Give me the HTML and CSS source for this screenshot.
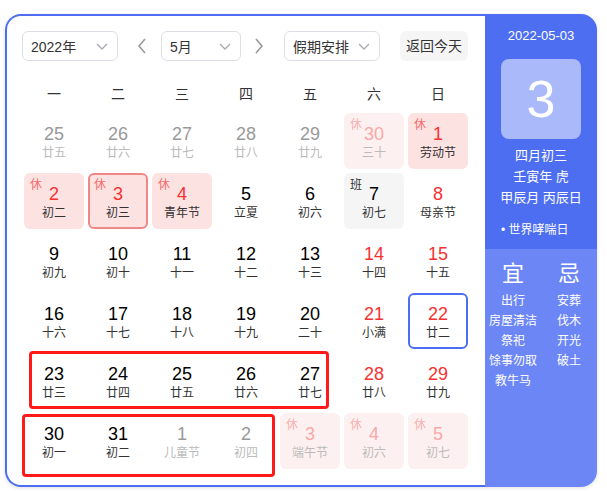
FILE: index.html
```html
<!DOCTYPE html>
<html lang="zh">
<head>
<meta charset="utf-8">
<link rel="stylesheet" href="styles.css">
</head>
<body>
<div class="cal">
  <div class="main">
    <div class="toolbar">
      <div class="select sel-year"><span>2022年</span><svg class="caret" viewBox="0 0 12 7" width="12" height="7"><path d="M1 1 L6 6 L11 1" fill="none" stroke="#a8abb2" stroke-width="1.4"/></svg></div>
      <svg class="arrow arrow-left" viewBox="0 0 10 16" width="10" height="16"><path d="M8 1 L2 8 L8 15" fill="none" stroke="#999" stroke-width="1.6"/></svg>
      <div class="select sel-month"><span>5月</span><svg class="caret" viewBox="0 0 12 7" width="12" height="7"><path d="M1 1 L6 6 L11 1" fill="none" stroke="#a8abb2" stroke-width="1.4"/></svg></div>
      <svg class="arrow arrow-right" viewBox="0 0 10 16" width="10" height="16"><path d="M2 1 L8 8 L2 15" fill="none" stroke="#999" stroke-width="1.6"/></svg>
      <div class="select sel-holiday"><span>假期安排</span><svg class="caret" viewBox="0 0 12 7" width="12" height="7"><path d="M1 1 L6 6 L11 1" fill="none" stroke="#a8abb2" stroke-width="1.4"/></svg></div>
      <div class="today-btn">返回今天</div>
    </div>
    <div class="weekdays">
      <div>一</div><div>二</div><div>三</div><div>四</div><div>五</div><div>六</div><div>日</div>
    </div>
    <div class="grid">
      <div class="cell out"><div class="num">25</div><div class="lunar">廿五</div></div>
      <div class="cell out"><div class="num">26</div><div class="lunar">廿六</div></div>
      <div class="cell out"><div class="num">27</div><div class="lunar">廿七</div></div>
      <div class="cell out"><div class="num">28</div><div class="lunar">廿八</div></div>
      <div class="cell out"><div class="num">29</div><div class="lunar">廿九</div></div>
      <div class="cell out rest"><span class="tag">休</span><div class="num">30</div><div class="lunar">三十</div></div>
      <div class="cell rest"><span class="tag">休</span><div class="num">1</div><div class="lunar">劳动节</div></div>

      <div class="cell rest"><span class="tag">休</span><div class="num">2</div><div class="lunar">初二</div></div>
      <div class="cell rest today"><span class="tag">休</span><div class="num">3</div><div class="lunar">初三</div></div>
      <div class="cell rest"><span class="tag">休</span><div class="num">4</div><div class="lunar">青年节</div></div>
      <div class="cell"><div class="num">5</div><div class="lunar">立夏</div></div>
      <div class="cell"><div class="num">6</div><div class="lunar">初六</div></div>
      <div class="cell work"><span class="tag">班</span><div class="num">7</div><div class="lunar">初七</div></div>
      <div class="cell red"><div class="num">8</div><div class="lunar">母亲节</div></div>

      <div class="cell"><div class="num">9</div><div class="lunar">初九</div></div>
      <div class="cell"><div class="num">10</div><div class="lunar">初十</div></div>
      <div class="cell"><div class="num">11</div><div class="lunar">十一</div></div>
      <div class="cell"><div class="num">12</div><div class="lunar">十二</div></div>
      <div class="cell"><div class="num">13</div><div class="lunar">十三</div></div>
      <div class="cell red"><div class="num">14</div><div class="lunar">十四</div></div>
      <div class="cell red"><div class="num">15</div><div class="lunar">十五</div></div>

      <div class="cell"><div class="num">16</div><div class="lunar">十六</div></div>
      <div class="cell"><div class="num">17</div><div class="lunar">十七</div></div>
      <div class="cell"><div class="num">18</div><div class="lunar">十八</div></div>
      <div class="cell"><div class="num">19</div><div class="lunar">十九</div></div>
      <div class="cell"><div class="num">20</div><div class="lunar">二十</div></div>
      <div class="cell red"><div class="num">21</div><div class="lunar">小满</div></div>
      <div class="cell red selected"><div class="num">22</div><div class="lunar">廿二</div></div>

      <div class="cell"><div class="num">23</div><div class="lunar">廿三</div></div>
      <div class="cell"><div class="num">24</div><div class="lunar">廿四</div></div>
      <div class="cell"><div class="num">25</div><div class="lunar">廿五</div></div>
      <div class="cell"><div class="num">26</div><div class="lunar">廿六</div></div>
      <div class="cell"><div class="num">27</div><div class="lunar">廿七</div></div>
      <div class="cell red"><div class="num">28</div><div class="lunar">廿八</div></div>
      <div class="cell red"><div class="num">29</div><div class="lunar">廿九</div></div>

      <div class="cell"><div class="num">30</div><div class="lunar">初一</div></div>
      <div class="cell"><div class="num">31</div><div class="lunar">初二</div></div>
      <div class="cell out"><div class="num">1</div><div class="lunar">儿童节</div></div>
      <div class="cell out"><div class="num">2</div><div class="lunar">初四</div></div>
      <div class="cell out rest"><span class="tag">休</span><div class="num">3</div><div class="lunar">端午节</div></div>
      <div class="cell out rest"><span class="tag">休</span><div class="num">4</div><div class="lunar">初六</div></div>
      <div class="cell out rest"><span class="tag">休</span><div class="num">5</div><div class="lunar">初七</div></div>
    </div>
  </div>
  <div class="side">
    <div class="side-top">
      <div class="side-date">2022-05-03</div>
      <div class="big-day">3</div>
      <div class="lunar-info">
        <div>四月初三</div>
        <div>壬寅年 虎</div>
        <div>甲辰月 丙辰日</div>
      </div>
      <div class="fest">• 世界哮喘日</div>
    </div>
    <div class="side-bottom">
      <div class="col">
        <div class="yj">宜</div>
        <div>出行</div>
        <div>房屋清洁</div>
        <div>祭祀</div>
        <div>馀事勿取</div>
        <div>教牛马</div>
      </div>
      <div class="col">
        <div class="yj">忌</div>
        <div>安葬</div>
        <div>伐木</div>
        <div>开光</div>
        <div>破土</div>
      </div>
    </div>
  </div>
</div>
<div class="mark mark-1"></div>
<div class="mark mark-2"></div>
</body>
</html>
```

FILE: styles.css
```css
* { box-sizing: border-box; }
html, body { margin: 0; padding: 0; background: #fff; }
body {
  font-family: "Liberation Sans", Arial, "Noto Sans CJK SC", sans-serif;
  color: #333;
  position: relative;
  width: 607px;
  height: 491px;
  overflow: hidden;
}
.cal {
  display: flex;
  margin: 14px 0 0 5px;
  width: 592px;
  height: 473px;
  border-radius: 16px;
  box-shadow: 0 1px 4px rgba(0, 0, 0, 0.12);
}
.main {
  width: 480px;
  border: 2px solid #4e6ef2;
  border-right: none;
  border-radius: 16px 0 0 16px;
  padding: 15px 0 0 15px;
  background: #fff;
}
.toolbar {
  display: flex;
  align-items: center;
  height: 30px;
}
.select {
  height: 30px;
  border: 1px solid #dcdfe6;
  border-radius: 6px;
  display: flex;
  align-items: center;
  justify-content: space-between;
  padding: 0 9px 0 8px;
  font-size: 14px;
  color: #333;
}
.sel-year { width: 96px; }
.sel-month { width: 80px; }
.sel-holiday { width: 96px; }
.arrow { display: block; }
.arrow-left { margin: 0 14px 0 19px; }
.arrow-right { margin: 0 20px 0 13px; }
.today-btn {
  margin-left: 20px;
  width: 68px;
  height: 30px;
  line-height: 30px;
  text-align: center;
  background: #f5f5f6;
  border-radius: 6px;
  font-size: 14px;
  color: #333;
}
.weekdays {
  display: grid;
  grid-template-columns: repeat(7, 60px);
  column-gap: 4px;
  margin: 20px 0 0 2px;
  height: 26px;
  line-height: 26px;
  font-size: 14px;
  text-align: center;
  color: #333;
}
.grid {
  display: grid;
  grid-template-columns: repeat(7, 60px);
  grid-auto-rows: 56px;
  gap: 4px;
  margin: 6px 0 0 2px;
}
.cell {
  position: relative;
  border-radius: 6px;
  text-align: center;
  padding-top: 10px;
}
.num {
  font-size: 18px;
  line-height: 22px;
  color: #000;
}
.lunar {
  font-size: 12px;
  line-height: 16px;
  color: #333;
}
.tag {
  position: absolute;
  left: 6px;
  top: 4px;
  font-size: 12px;
  line-height: 16px;
  color: #f56c6c;
}
.red .num { color: #f73131; }
.rest { background: #fde2e2; }
.rest .num { color: #f73131; }
.work { background: #f5f5f6; }
.work .tag { color: #333; }
.out .num { color: #999; }
.out .lunar { color: #bbb; }
.out.rest { background: #fdf0f0; }
.out.rest .num { color: #f9a8a8; }
.out.rest .tag { color: #f9b0b0; }
.today { border: 2px solid #f08787; padding-top: 8px; }
.today .tag { left: 4px; top: 2px; }
.selected { border: 2px solid #4e6ef2; padding-top: 8px; }

.side {
  width: 112px;
  border-radius: 0 16px 16px 0;
  overflow: hidden;
  color: #fff;
  display: flex;
  flex-direction: column;
}
.side-top {
  height: 235px;
  background: #4e6ef2;
  padding-top: 12px;
  text-align: center;
}
.side-date {
  font-size: 13px;
  line-height: 20px;
}
.big-day {
  width: 80px;
  height: 80px;
  margin: 13px auto 0;
  background: #a9b9fa;
  border-radius: 8px;
  font-size: 52px;
  line-height: 80px;
  color: #fff;
}
.lunar-info {
  margin-top: 6px;
  font-size: 13px;
  line-height: 21px;
}
.fest {
  margin-top: 12px;
  font-size: 12px;
  line-height: 20px;
  text-align: left;
  padding-left: 16px;
}
.side-bottom {
  flex: 1;
  background: #6c87f5;
  display: grid;
  grid-template-columns: 56px 56px;
  padding-top: 12px;
  align-content: start;
}
.col {
  text-align: center;
  font-size: 12px;
  line-height: 20px;
}
.col .yj {
  font-size: 22px;
  line-height: 26px;
  margin-bottom: 4px;
}
.mark {
  position: absolute;
  border: 3px solid #ff1a1a;
  border-radius: 4px;
}
.mark-1 { left: 29px; top: 351px; width: 300px; height: 58px; }
.mark-2 { left: 22px; top: 414px; width: 253px; height: 63px; }
```
